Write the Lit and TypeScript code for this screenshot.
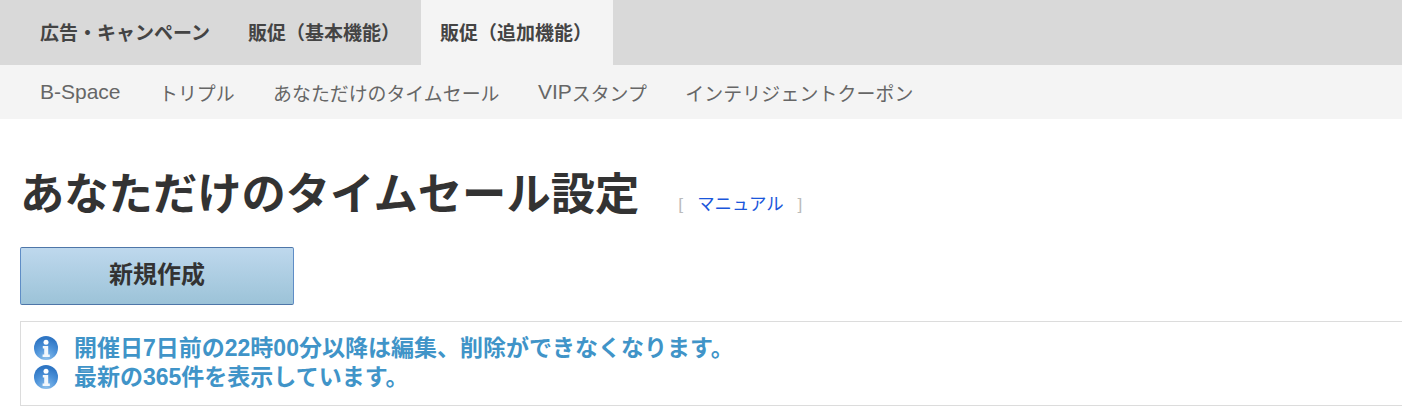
import { LitElement, html, css } from "lit";
import { customElement } from "lit/decorators.js";

const infoIcon = html`<svg class="ico" width="24" height="24" viewBox="0 0 24 24">
  <defs>
    <radialGradient id="g" cx="0.5" cy="0.95" r="0.85">
      <stop offset="0" stop-color="#8cc0ec"/>
      <stop offset="0.55" stop-color="#4f94da"/>
      <stop offset="1" stop-color="#2f76c4"/>
    </radialGradient>
  </defs>
  <circle cx="12" cy="12" r="12" fill="url(#g)"/>
  <circle cx="12" cy="6.2" r="2.5" fill="#fff"/>
  <path d="M8.8 10h5.4v8.6h1.6V21H8.6v-2.4h1.6v-6.2H8.8z" fill="#f2f7fc"/>
</svg>`;

@customElement("app-root")
export class AppRoot extends LitElement {
  static styles = css`
    :host { display: block; width: 1402px; height: 418px; overflow: hidden; background: #fff; font-family: "Liberation Sans", "Noto Sans CJK JP", sans-serif; }
    .top { display: flex; height: 65px; background: #d9d9d9; padding-left: 20px; }
    .top a { display: flex; align-items: center; padding: 0 20px 3px; font-size: 19px; font-weight: 700; color: #444; }
    .top a.first { padding-right: 18px; }
    .top a.second { padding-right: 21px; padding-left: 20px; }
    .top a.on { background: #f4f4f4; padding: 0 21px 3px 19px; }
    .sub { display: flex; height: 54px; background: #f4f4f4; padding-left: 20.75px; }
    .sub a { display: flex; align-items: center; padding: 0 19.25px; font-size: 18.9px; color: #666; }
    .sub a.wide { letter-spacing: 0.13px; }
    .latin { font-size: 21px; }
    .head { display: flex; align-items: flex-start; padding: 50px 0 0 20px; height: 59px; }
    h1 { margin: 0; font-size: 44.3px; line-height: 52px; font-weight: 700; color: #333; }
    .man { display: flex; font-size: 17.4px; color: #bbb; margin: 23px 0 0 39px; line-height: 24px; gap: 14px; }
    .man a { color: #1a56db; }
    .btn { box-sizing: border-box; margin: 19px 0 0 20px; width: 274px; height: 58px; border: 1px solid #5f8dc6; border-top-color: #4e76a8; border-bottom-color: #4e76a8; border-radius: 2px;
      background: linear-gradient(#bed8ed, #9cc3d8); display: flex; align-items: center; justify-content: center; padding-bottom: 8px; font-size: 24px; font-weight: 700; color: #333; }
    .msg { box-sizing: border-box; margin: 16px 0 0 20px; width: 1382px; height: 85px; border: 1px solid #dcdcdc; border-right: 0; padding: 11px 0 0 13px; }
    .row { display: flex; align-items: center; height: 29px; gap: 16px; font-size: 23px; font-weight: 700; color: #4094c8; }
    .row span { padding-bottom: 3px; }
  `;

  render() {
    return html`
      <div class="top">
        <a class="first">広告・キャンペーン</a><a class="second">販促（基本機能）</a><a class="on">販促（追加機能）</a>
      </div>
      <div class="sub">
        <a><span class="latin">B-Space</span></a><a>トリプル</a><a>あなただけのタイムセール</a><a><span class="latin">VIP</span>スタンプ</a><a class="wide">インテリジェントクーポン</a>
      </div>
      <div class="head">
        <h1>あなただけのタイムセール設定</h1>
        <div class="man"><span>[</span><a>マニュアル</a><span>]</span></div>
      </div>
      <div class="btn">新規作成</div>
      <div class="msg">
        <div class="row">${infoIcon}<span>開催日7日前の22時00分以降は編集、削除ができなくなります。</span></div>
        <div class="row">${infoIcon}<span>最新の365件を表示しています。</span></div>
      </div>
    `;
  }
}
